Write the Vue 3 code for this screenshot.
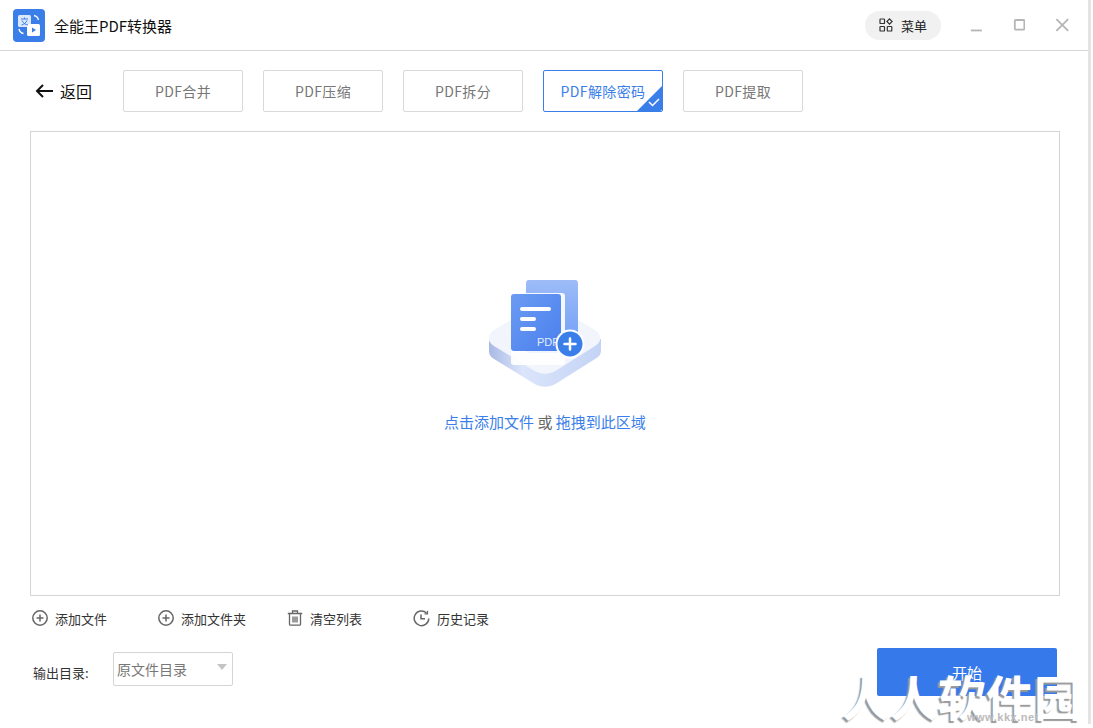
<script setup>
const tabs = ["PDF合并", "PDF压缩", "PDF拆分", "PDF解除密码", "PDF提取"];
const activeTab = "PDF解除密码";
</script>

<template>
  <div class="window">
    <header class="titlebar">
      <div class="logo">
        <svg width="32" height="33" viewBox="0 0 32 33">
          <rect width="32" height="33" rx="4" fill="#3a7eea" />
          <rect x="5" y="6" width="13" height="12" rx="1.5" fill="#dbe8fc" />
          <rect x="14" y="15" width="13" height="12" rx="1.5" fill="#fff" />
          <path d="M8 10h7M11.5 8.5v1.5M9 11.5c1.5 3 3.500 4 6 4.500M14 11.500c-1 2.500-3 3.700-5.500 4.500" stroke="#3a7eea" stroke-width="1" fill="none" />
          <path d="M19 18.500v5l4-2.500z" fill="#3a7eea" />
          <path d="M21 6.500c2.500 .5 4 2 4.500 4.500M6 20c.5 2.500 2 4 4.500 4.500" stroke="#fff" stroke-width="1.300" fill="none" />
        </svg>
      </div>
      <span class="app-name">全能王PDF转换器</span>
      <div class="menu-pill">
        <svg width="14" height="14" viewBox="0 0 14 14" fill="none" stroke="#333" stroke-width="1.200">
          <rect x="1" y="1" width="4.500" height="4.500" rx=".6" />
          <path d="M10.500 .9l2.600 2.600-2.600 2.600-2.600-2.600z" />
          <rect x="1" y="8.500" width="4.500" height="4.500" rx=".6" />
          <rect x="8.300" y="8.500" width="4.500" height="4.500" rx=".6" />
        </svg>
        <span>菜单</span>
      </div>
      <div class="win-btns">
        <svg width="14" height="14" viewBox="0 0 14 14"><path d="M1 13h12" stroke="#b5b5b5" stroke-width="2" /></svg>
        <svg width="14" height="14" viewBox="0 0 14 14"><rect x="2" y="1.500" width="10.500" height="10.500" rx="1" fill="none" stroke="#b5b5b5" stroke-width="2" /></svg>
        <svg width="16" height="16" viewBox="0 0 16 16"><path d="M1.500 1.500l13 13M14.500 1.500l-13 13" stroke="#b5b5b5" stroke-width="2" /></svg>
      </div>
    </header>

    <main class="content">
      <div class="tabs-row">
        <div class="back">
          <svg width="18" height="14" viewBox="0 0 18 14" fill="none" stroke="#111" stroke-width="2">
            <path d="M18 7H2M8 1L2 7l6 6" />
          </svg>
          <span>返回</span>
        </div>
        <div class="tabs">
          <div v-for="t in tabs" :key="t" class="tab" :class="{ active: t === activeTab }">
            {{ t }}
            <svg v-if="t === activeTab" class="corner" width="25" height="25" viewBox="0 0 25 25">
              <path d="M25 0v23a2 2 0 0 1-2 2H0z" fill="#3a7eea" />
              <path d="M12 16l3.500 3.500L22 13" stroke="#fff" stroke-width="1.500" fill="none" />
            </svg>
          </div>
        </div>
      </div>

      <section class="dropzone">
        <svg class="illus" width="124" height="118" viewBox="0 0 124 118">
          <defs>
            <linearGradient id="docA" x1="0" y1="0" x2="0" y2="1">
              <stop offset="0" stop-color="#9dbcf8" />
              <stop offset="1" stop-color="#6d9bf5" />
            </linearGradient>
            <linearGradient id="docB" x1="0" y1="0" x2="1" y2="1">
              <stop offset="0" stop-color="#6b9bf2" />
              <stop offset="1" stop-color="#4a80ee" />
            </linearGradient>
            <linearGradient id="base" x1="0" y1="0" x2="1" y2="0">
              <stop offset="0" stop-color="#a9b9e4" />
              <stop offset=".3" stop-color="#dbe5fb" />
              <stop offset="1" stop-color="#c4d3f5" />
            </linearGradient>
          </defs>
          <path d="M6 62v12c0 4 2 6 5 8l39 24c8 5 16 5 24 0l38-24c4-2 6-5 6-8V62z" fill="url(#base)" />
          <path d="M50 30L11 53c-7 4-7 12 0 16l39 24c8 5 16 5 24 0l38-24c7-4 7-12 0-16L74 30c-8-5-16-5-24 0z" fill="#f3f5fd" />
          <rect x="43" y="3" width="52" height="73" rx="3" fill="url(#docA)" />
          <rect x="28" y="16" width="54" height="72" rx="3" fill="#fff" opacity=".9" />
          <rect x="28" y="17" width="50" height="57" rx="3" fill="url(#docB)" />
          <rect x="37" y="30" width="31" height="4" rx="2" fill="#fff" />
          <rect x="37" y="40" width="16" height="4" rx="2" fill="#fff" />
          <rect x="37" y="50" width="16" height="4" rx="2" fill="#fff" />
          <text x="54" y="69" class="illus-pdf">PDF</text>
          <circle cx="87" cy="67" r="14.500" fill="#fff" />
          <circle cx="87" cy="67" r="12.500" fill="#3a7eea" />
          <path d="M81.500 67h11M87 61.500v11" stroke="#fff" stroke-width="2.500" stroke-linecap="round" />
        </svg>
        <p class="drop-text"><span class="link">点击添加文件</span> 或 <span class="link">拖拽到此区域</span></p>
      </section>

      <div class="toolbar">
        <div class="tool t1">
          <svg width="16" height="16" viewBox="0 0 16 16" fill="none" stroke="#666" stroke-width="1.500">
            <circle cx="8" cy="8" r="7.200" /><path d="M4.500 8h7M8 4.500v7" />
          </svg>
          <span>添加文件</span>
        </div>
        <div class="tool t2">
          <svg width="16" height="16" viewBox="0 0 16 16" fill="none" stroke="#666" stroke-width="1.500">
            <circle cx="8" cy="8" r="7.200" /><path d="M4.500 8h7M8 4.500v7" />
          </svg>
          <span>添加文件夹</span>
        </div>
        <div class="tool t3">
          <svg width="16" height="16" viewBox="0 0 16 16" fill="none" stroke="#666" stroke-width="1.300">
            <path d="M.8 3.500h14.400M5.500 3.300V1h5v2.300M2.500 3.500v10.700a1 1 0 0 0 1 1h9a1 1 0 0 0 1-1V3.500M6 6.500v6M8 6.500v6M10 6.500v6" />
          </svg>
          <span>清空列表</span>
        </div>
        <div class="tool t4">
          <svg width="17" height="17" viewBox="0 0 17 17" fill="none" stroke="#666" stroke-width="1.500">
            <path d="M13.500 3A7.300 7.300 0 1 0 15.800 8.500" />
            <path d="M14.500 .8V3.800H11.500" stroke-width="1.200" />
            <path d="M8 4.500v4.300h4" />
          </svg>
          <span>历史记录</span>
        </div>
      </div>

      <div class="bottom-row">
        <span class="out-label">输出目录:</span>
        <div class="select">
          <span>原文件目录</span>
          <i class="caret"></i>
        </div>
        <button class="start">开始</button>
      </div>
    </main>

    <div class="watermark">
      <span class="wm-big">人人软件园</span>
      <span class="wm-url">www.kkx.net</span>
    </div>
  </div>
</template>

<style scoped>
.window {
  position: relative;
  width: 1088px;
  height: 724px;
  background: #fff;
  box-shadow: 1px 1px 0 2px #e4e4e4;
  overflow: hidden;
  font-family: "Noto Sans CJK SC", "Liberation Sans", sans-serif;
}
.titlebar {
  display: flex;
  align-items: center;
  height: 50px;
  padding: 0 18px 0 13px;
  box-sizing: content-box;
  border-bottom: 1px solid #d8d8d8;
}
.logo {
  display: flex;
  width: 32px;
  height: 33px;
}
.app-name {
  margin-left: 9px;
  font-size: 15px;
  color: #111;
}
.menu-pill {
  display: flex;
  align-items: center;
  gap: 8px;
  margin-left: auto;
  height: 29px;
  width: 76px;
  padding-left: 14px;
  box-sizing: border-box;
  border-radius: 15px;
  background: #f1f1f1;
  font-size: 13px;
  color: #222;
}
.win-btns {
  display: flex;
  align-items: center;
  gap: 30px;
  margin-left: 29px;
  width: 100px;
}
.content {
  padding: 19px 28px 0 30px;
}
.tabs-row {
  display: flex;
  align-items: center;
  height: 42px;
}
.back {
  display: flex;
  align-items: center;
  gap: 7px;
  margin-left: 5px;
  width: 88px;
  font-size: 16px;
  color: #111;
}
.tabs {
  display: flex;
  gap: 20px;
}
.tab {
  position: relative;
  width: 120px;
  height: 42px;
  box-sizing: border-box;
  border: 1px solid #d9d9d9;
  border-radius: 2px;
  display: flex;
  align-items: center;
  justify-content: center;
  font-size: 14px;
  color: #777;
  letter-spacing: .4px;
}
.tab.active {
  border-color: #3a7eea;
  color: #3a7eea;
  overflow: hidden;
}
.corner {
  position: absolute;
  right: 0;
  bottom: 0;
}
.dropzone {
  margin-top: 19px;
  height: 465px;
  box-sizing: border-box;
  border: 1px solid #d4d4d4;
  display: flex;
  flex-direction: column;
  align-items: center;
  padding-top: 145px;
}
.illus-pdf {
  font-family: "Liberation Sans", sans-serif;
  font-size: 11px;
  fill: #e4edff;
}
.drop-text {
  margin: 16px 0 0;
  font-size: 15px;
  line-height: 22px;
  color: #666;
}
.link {
  color: #3a7eea;
}
.toolbar {
  display: flex;
  align-items: center;
  height: 20px;
  margin-top: 12px;
  font-size: 13px;
  color: #333;
}
.tool {
  display: flex;
  align-items: center;
  gap: 7px;
}
.t1 {
  margin-left: 2px;
  width: 126px;
}
.t2 {
  width: 129px;
}
.t3 {
  width: 126px;
}
.bottom-row {
  display: flex;
  align-items: center;
  position: relative;
  height: 48px;
  margin-top: 20px;
  font-size: 13px;
  color: #333;
}
.out-label {
  margin-left: 3px;
  width: 80px;
}
.select {
  display: flex;
  align-items: center;
  justify-content: space-between;
  width: 120px;
  height: 34px;
  margin-top: -6px;
  box-sizing: border-box;
  padding: 0 5px 0 3px;
  border: 1px solid #d4d4d4;
  border-radius: 2px;
  font-size: 14px;
  color: #777;
}
.caret {
  width: 0;
  height: 0;
  margin-bottom: 4px;
  border: 5px solid transparent;
  border-top: 6px solid #c4c4c4;
  border-bottom: 0;
}
.start {
  margin-left: auto;
  margin-right: 3px;
  width: 180px;
  height: 48px;
  border: 0;
  border-radius: 2px;
  background: #3579ea;
  color: #fff;
  font-family: inherit;
  font-size: 15px;
  padding-bottom: 0;
}
.watermark {
  position: absolute;
  right: -4px;
  bottom: -8px;
  width: 250px;
  height: 62px;
  pointer-events: none;
}
.wm-big {
  position: absolute;
  left: 0;
  top: 0;
  font-size: 48px;
  line-height: 50px;
  font-weight: 700;
  white-space: nowrap;
  color: #fff;
  letter-spacing: 0;
  text-shadow: -2px 2px 1px #9a9a9a;
}
.wm-url {
  position: absolute;
  left: 125px;
  bottom: 9px;
  font: 700 11px "Liberation Sans", sans-serif;
  letter-spacing: .5px;
  color: #bbb;
}
</style>

<style>
body {
  background: #fff;
}
</style>
